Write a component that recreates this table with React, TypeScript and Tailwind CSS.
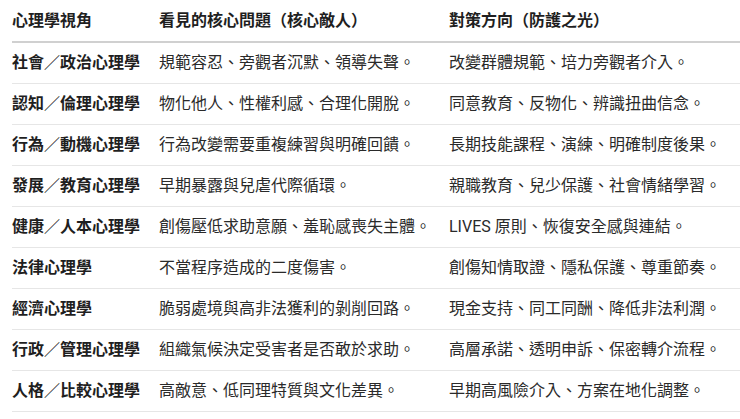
const rows: [string, string, string][] = [
  ['社會／政治心理學', '規範容忍、旁觀者沉默、領導失聲。', '改變群體規範、培力旁觀者介入。'],
  ['認知／倫理心理學', '物化他人、性權利感、合理化開脫。', '同意教育、反物化、辨識扭曲信念。'],
  ['行為／動機心理學', '行為改變需要重複練習與明確回饋。', '長期技能課程、演練、明確制度後果。'],
  ['發展／教育心理學', '早期暴露與兒虐代際循環。', '親職教育、兒少保護、社會情緒學習。'],
  ['健康／人本心理學', '創傷壓低求助意願、羞恥感喪失主體。', 'LIVES 原則、恢復安全感與連結。'],
  ['法律心理學', '不當程序造成的二度傷害。', '創傷知情取證、隱私保護、尊重節奏。'],
  ['經濟心理學', '脆弱處境與高非法獲利的剝削回路。', '現金支持、同工同酬、降低非法利潤。'],
  ['行政／管理心理學', '組織氣候決定受害者是否敢於求助。', '高層承諾、透明申訴、保密轉介流程。'],
  ['人格／比較心理學', '高敵意、低同理特質與文化差異。', '早期高風險介入、方案在地化調整。'],
];

export default function App() {
  return (
    <div
      className="min-h-screen bg-white pl-3 text-[16px] text-[#2a2a2a]"
      style={{ fontFamily: 'Roboto, "Noto Sans CJK TC", sans-serif' }}
    >
      {/* Header */}
      <div className="grid h-[43px] grid-cols-[147px_290px_1fr] items-center border-b-2 border-[#d0d0d0] font-bold text-[#1f1f1f]">
        <div>心理學視角</div>
        <div>看見的核心問題（核心敵人）</div>
        <div>對策方向（防護之光）</div>
      </div>

      {/* Rows */}
      {rows.map(([view, problem, remedy]) => (
        <div
          key={view}
          className="grid h-[41px] grid-cols-[147px_290px_1fr] items-center border-b border-[#e6e6e6]"
        >
          <div className="font-bold text-[#1f1f1f]">{view}</div>
          <div>{problem}</div>
          <div>{remedy}</div>
        </div>
      ))}
    </div>
  );
}
